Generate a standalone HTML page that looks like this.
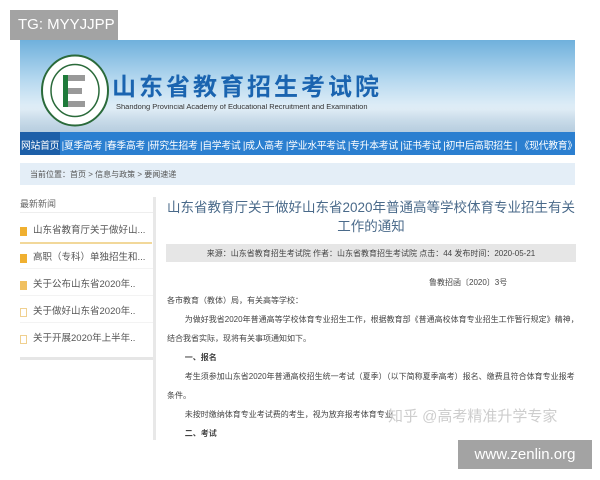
<!DOCTYPE html><html><head><meta charset="utf-8"><style>
*{margin:0;padding:0;box-sizing:border-box}
body{width:600px;height:480px;background:#fff;position:relative;overflow:hidden;font-family:"Liberation Sans","Noto Sans CJK SC",sans-serif;color:#444}
.a{position:absolute;white-space:nowrap}
</style></head><body>
<div class="a" style="left:20px;top:40px;width:555px;height:93px;background:linear-gradient(180deg,#6fb0dc 0%,#b9daf0 45%,#e4f0f8 75%,#c9dcea 100%)"></div>
<div class="a" style="left:20px;top:105px;width:555px;height:28px;background:linear-gradient(180deg,rgba(255,255,255,0) 0%,rgba(170,195,215,.6) 100%)"></div>
<svg class="a" style="left:40px;top:53px" width="70" height="75"><ellipse cx="35" cy="37.5" rx="33" ry="35" fill="#fff" stroke="#2a6a3a" stroke-width="2"/><ellipse cx="35" cy="37.5" rx="24" ry="26" fill="#fff" stroke="#2a6a3a" stroke-width="1.5"/><rect x="23" y="22" width="5" height="32" fill="#1e7a3a"/><rect x="28" y="22" width="17" height="6" fill="#999"/><rect x="28" y="35" width="14" height="6" fill="#999"/><rect x="28" y="48" width="17" height="6" fill="#999"/></svg>
<div class="a" style="left:112px;top:67px;font-size:24px;font-weight:bold;color:#1a64b0;letter-spacing:3px">山东省教育招生考试院</div>
<div class="a" style="left:116px;top:104px;font-size:7px;color:#333;transform:scaleX(1.07);transform-origin:left">Shandong Provincial Academy of Educational Recruitment and Examination</div>
<div class="a" style="left:20px;top:132px;width:555px;height:23px;background:#2b7fd0"></div>
<div class="a" style="left:20px;top:132px;width:40px;height:23px;background:#1d5fa8"></div>
<div class="a" style="left:21px;top:137px;font-size:10px;color:#fff;letter-spacing:-.3px;transform:scaleX(0.985);transform-origin:left">网站首页 |夏季高考 |春季高考 |研究生招考 |自学考试 |成人高考 |学业水平考试 |专升本考试 |证书考试 |初中后高职招生 | 《现代教育》</div>
<div class="a" style="left:20px;top:163px;width:555px;height:22px;background:#e4eef7"></div>
<div class="a" style="left:30px;top:169px;font-size:8px;color:#555">当前位置：首页 &gt; 信息与政策 &gt; 要闻速递</div>
<div class="a" style="left:20px;top:197px;font-size:9px;color:#666">最新新闻</div>
<div class="a" style="left:20px;top:212px;width:133px;height:1px;background:#eee"></div>
<div class="a" style="left:20px;top:242px;width:132px;height:2px;background:#f2d89a"></div>
<div class="a" style="left:20px;top:357px;width:133px;height:3px;background:#e6e6e6"></div>
<div class="a" style="left:153px;top:197px;width:3px;height:243px;background:#e8e8e8"></div>
<div class="a" style="left:20px;top:227px;width:7px;height:9px;background:#f0b030"></div>
<div class="a" style="left:20px;top:254px;width:7px;height:9px;background:#f0b030"></div>
<div class="a" style="left:20px;top:281px;width:7px;height:9px;background:#f0c060"></div>
<div class="a" style="left:20px;top:308px;width:7px;height:9px;border:1px solid #f0d090"></div>
<div class="a" style="left:20px;top:335px;width:7px;height:9px;border:1px solid #f0d090"></div>
<div class="a" style="left:33px;top:217px;font-size:9.5px;color:#555;line-height:27px">山东省教育厅关于做好山...<br>高职（专科）单独招生和...<br>关于公布山东省2020年..<br>关于做好山东省2020年..<br>关于开展2020年上半年..</div>
<div class="a" style="left:20px;top:268px;width:133px;height:1px;background:#f3f3f3"></div>
<div class="a" style="left:20px;top:295px;width:133px;height:1px;background:#f3f3f3"></div>
<div class="a" style="left:20px;top:322px;width:133px;height:1px;background:#f3f3f3"></div>
<div class="a" style="left:166px;top:198px;width:410px;text-align:center;font-size:13.5px;color:#4a6a8a;line-height:19px;white-space:normal">山东省教育厅关于做好山东省2020年普通高等学校体育专业招生有关工作的通知</div>
<div class="a" style="left:166px;top:244px;width:410px;height:18px;background:#e6e6e6"></div>
<div class="a" style="left:166px;top:248px;width:410px;text-align:center;font-size:8px;color:#444">来源：山东省教育招生考试院 作者：山东省教育招生考试院 点击：44 发布时间：2020-05-21</div>
<div class="a" style="left:429px;top:277px;font-size:8px;color:#444">鲁教招函〔2020〕3号</div>
<div class="a" style="left:167px;top:291px;font-size:8px;color:#444;line-height:19px">各市教育（教体）局，有关高等学校：<br>&nbsp;&nbsp;&nbsp;&nbsp;&nbsp;&nbsp;&nbsp;&nbsp;为做好我省2020年普通高等学校体育专业招生工作，根据教育部《普通高校体育专业招生工作暂行规定》精神，<br>结合我省实际，现将有关事项通知如下。<br>&nbsp;&nbsp;&nbsp;&nbsp;&nbsp;&nbsp;&nbsp;&nbsp;<b>一、报名</b><br>&nbsp;&nbsp;&nbsp;&nbsp;&nbsp;&nbsp;&nbsp;&nbsp;考生须参加山东省2020年普通高校招生统一考试（夏季）（以下简称夏季高考）报名、缴费且符合体育专业报考<br>条件。<br>&nbsp;&nbsp;&nbsp;&nbsp;&nbsp;&nbsp;&nbsp;&nbsp;未按时缴纳体育专业考试费的考生，视为放弃报考体育专业<br>&nbsp;&nbsp;&nbsp;&nbsp;&nbsp;&nbsp;&nbsp;&nbsp;<b>二、考试</b></div>
<div class="a" style="left:388px;top:405px;font-size:15px;color:rgba(200,200,200,.9)">知乎 @高考精准升学专家</div>
<div class="a" style="left:10px;top:10px;width:108px;height:30px;background:#a3a3a3;color:#fff;font-size:15px;line-height:30px;padding-left:8px">TG: MYYJJPP</div>
<div class="a" style="left:458px;top:440px;width:134px;height:29px;background:#a3a3a3;color:#fff;font-size:15px;line-height:29px;text-align:center">www.zenlin.org</div>
</body></html>
